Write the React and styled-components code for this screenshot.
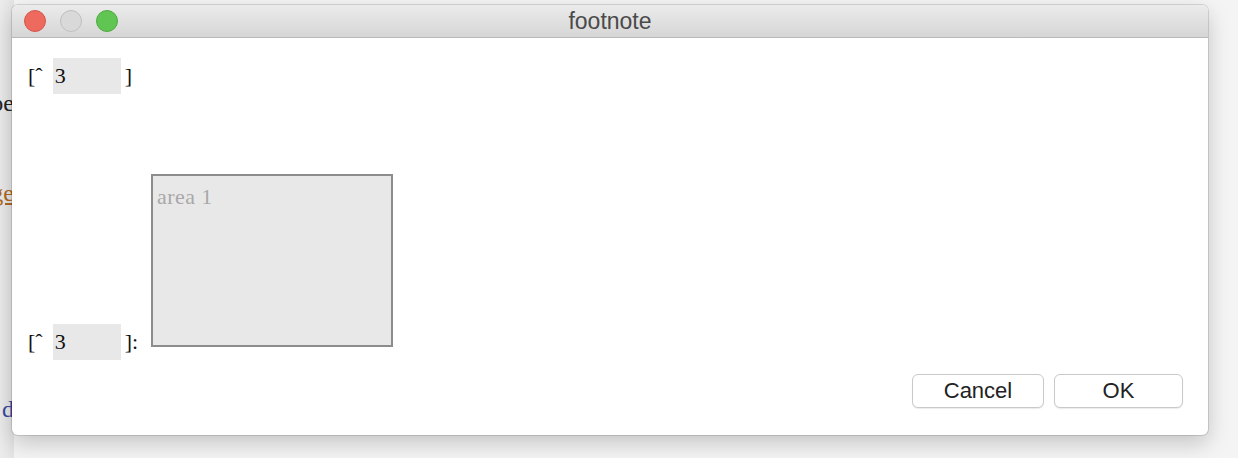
import styled, { createGlobalStyle } from "styled-components";

const GlobalStyle = createGlobalStyle`
  html, body {
    margin: 0;
    padding: 0;
    width: 1238px;
    height: 458px;
    overflow: hidden;
    background: #f3f3f3;
  }
`;

const Desktop = styled.div`
  position: relative;
  width: 1238px;
  height: 458px;
  background: #f4f4f4;
`;

const Editor = styled.div`
  width: 14px;
  height: 458px;
  background: linear-gradient(to right, #ececec, #e4e4e4);
  display: flex;
  flex-direction: column;
  padding-top: 90px;
  box-sizing: border-box;
`;

const EditorLine = styled.div`
  display: flex;
  justify-content: flex-end;
  overflow: hidden;
  height: 26px;
  margin-top: ${(p) => p.$gap || 0}px;
  font-family: "Liberation Serif", serif;
  font-size: 24px;
  line-height: 26px;
  white-space: nowrap;
  color: ${(p) => p.$color || "#222"};
  text-decoration: ${(p) => (p.$underline ? "underline" : "none")};
`;

const Window = styled.div`
  position: absolute;
  left: 12px;
  top: 5px;
  width: 1196px;
  height: 430px;
  background: #fff;
  border-radius: 6px;
  overflow: hidden;
  display: flex;
  flex-direction: column;
  box-shadow: 0 0 0 1px rgba(0, 0, 0, 0.12), 0 8px 22px rgba(0, 0, 0, 0.2);
`;

const TitleBar = styled.div`
  height: 32px;
  flex-shrink: 0;
  display: grid;
  grid-template-columns: 1fr auto 1fr;
  align-items: center;
  padding: 0 12px;
  background: linear-gradient(#ebebeb, #d6d6d6);
  border-bottom: 1px solid #b9b9b9;
`;

const Lights = styled.div`
  display: flex;
  gap: 14px;
`;

const Light = styled.span`
  width: 20px;
  height: 20px;
  border-radius: 50%;
  background: ${(p) => p.$fill};
  border: 1px solid ${(p) => p.$edge};
`;

const Title = styled.div`
  font-family: "Liberation Sans", Arial, sans-serif;
  font-size: 23px;
  color: #4a4a4a;
`;

const Body = styled.div`
  flex: 1;
  display: flex;
  flex-direction: column;
  padding: 20px 16px 0;
  font-family: "Liberation Serif", "Times New Roman", serif;
  font-size: 22px;
  color: #111;
`;

const Row = styled.div`
  display: flex;
  align-items: ${(p) => p.$align || "center"};
  margin-top: ${(p) => p.$top || 0}px;
`;

const Mark = styled.span`
  height: 36px;
  line-height: 36px;
  margin-right: ${(p) => p.$right || 0}px;
`;

const Field = styled.div`
  width: 68px;
  height: 36px;
  line-height: 36px;
  padding-left: 2px;
  box-sizing: border-box;
  background: #e8e8e8;
  margin: 0 4px 0 10px;
`;

const Area = styled.div`
  width: 242px;
  height: 173px;
  box-sizing: border-box;
  border: 2px solid #8c8c8c;
  background: #e8e8e8;
  margin-bottom: 13px;
  padding: 8px 4px;
  font-size: 22px;
  letter-spacing: 0.4px;
  color: #a8a8a8;
`;

const Footer = styled.div`
  margin-top: auto;
  display: flex;
  justify-content: flex-end;
  gap: 10px;
  padding: 0 25px 27px 0;
`;

const Button = styled.button`
  width: ${(p) => p.$width}px;
  height: 34px;
  border: 1px solid #c9c9c9;
  border-radius: 6px;
  background: #fff;
  box-shadow: 0 1px 1px rgba(0, 0, 0, 0.08);
  font-family: "Liberation Sans", Arial, sans-serif;
  font-size: 22px;
  color: #222;
  padding: 0;
`;

const App = () => {
  return (
    <Desktop>
      <GlobalStyle />
      <Editor>
        <EditorLine>pe</EditorLine>
        <EditorLine $gap={64} $color="#b0681e" $underline>
          ge
        </EditorLine>
        <EditorLine $gap={190} $color="#3b4aa0">
          d
        </EditorLine>
      </Editor>
      <Window>
        <TitleBar>
          <Lights>
            <Light $fill="#ee6a5f" $edge="#d4554a" />
            <Light $fill="#d9d9d9" $edge="#bfbfbf" />
            <Light $fill="#61c554" $edge="#4ea93f" />
          </Lights>
          <Title>footnote</Title>
          <span />
        </TitleBar>
        <Body>
          <Row>
            <Mark>[ˆ</Mark>
            <Field>3</Field>
            <Mark>]</Mark>
          </Row>
          <Row $align="flex-end" $top={80}>
            <Mark>[ˆ</Mark>
            <Field>3</Field>
            <Mark $right={13}>]:</Mark>
            <Area>area 1</Area>
          </Row>
        </Body>
        <Footer>
          <Button $width={132}>Cancel</Button>
          <Button $width={129}>OK</Button>
        </Footer>
      </Window>
    </Desktop>
  );
};

export default App;
